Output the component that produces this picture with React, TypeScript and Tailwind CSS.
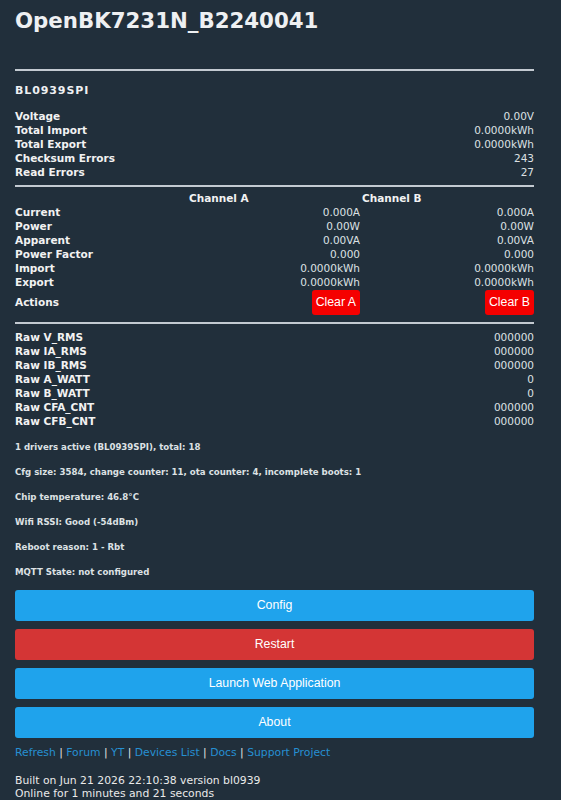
import React from 'react';

const summaryRows = [
  ['Voltage', '0.00V'],
  ['Total Import', '0.0000kWh'],
  ['Total Export', '0.0000kWh'],
  ['Checksum Errors', '243'],
  ['Read Errors', '27'],
];

const channelRows = [
  ['Current', '0.000A', '0.000A'],
  ['Power', '0.00W', '0.00W'],
  ['Apparent', '0.00VA', '0.00VA'],
  ['Power Factor', '0.000', '0.000'],
  ['Import', '0.0000kWh', '0.0000kWh'],
  ['Export', '0.0000kWh', '0.0000kWh'],
];

const rawRows = [
  ['Raw V_RMS', '000000'],
  ['Raw IA_RMS', '000000'],
  ['Raw IB_RMS', '000000'],
  ['Raw A_WATT', '0'],
  ['Raw B_WATT', '0'],
  ['Raw CFA_CNT', '000000'],
  ['Raw CFB_CNT', '000000'],
];

const infoLines = [
  '1 drivers active (BL0939SPI), total: 18',
  'Cfg size: 3584, change counter: 11, ota counter: 4, incomplete boots: 1',
  'Chip temperature: 46.8°C',
  'Wifi RSSI: Good (-54dBm)',
  'Reboot reason: 1 - Rbt',
  'MQTT State: not configured',
];

const links = ['Refresh', 'Forum', 'YT', 'Devices List', 'Docs', 'Support Project'];

function Rule() {
  return <div className="h-[2px] bg-[#c3cad1]" />;
}

function KeyValue({ label, value }: { label: string; value: string }) {
  return (
    <div className="flex justify-between h-[14px] leading-[14px]">
      <span className="font-bold text-[#f2f2f2]">{label}</span>
      <span className="text-[#dde1e4]">{value}</span>
    </div>
  );
}

export default function App() {
  return (
    <div className="min-h-screen bg-[#212f3b] text-[#eaeaea] text-[10.5px] font-['DejaVu_Sans',sans-serif]">
      <div className="ml-[15px] w-[519px] pt-[9px] pb-[4px]">
        <h1 className="text-[21.3px] font-bold h-[24px] leading-[24px] text-[#eef0f2]">OpenBK7231N_B2240041</h1>

        <div className="mt-[36px]">
          <Rule />
        </div>

        <h3 className="mt-[13px] h-[13px] leading-[13px] text-[11px] font-bold tracking-[0.9px] text-[#eef0f2]">BL0939SPI</h3>

        {/* summary */}
        <div className="mt-[12px]">
          {summaryRows.map(([label, value]) => (
            <KeyValue key={label} label={label} value={value} />
          ))}
        </div>

        <div className="mt-[6px]">
          <Rule />
        </div>

        {/* channels */}
        <div className="mt-[4px] grid grid-cols-[1fr_173px_174px]">
          <div className="h-[14px]" />
          <div className="h-[14px] leading-[14px] pl-[2px] font-bold text-[#f2f2f2]">Channel A</div>
          <div className="h-[14px] leading-[14px] pl-[2px] font-bold text-[#f2f2f2]">Channel B</div>
          {channelRows.map(([label, a, b]) => (
            <React.Fragment key={label}>
              <div className="h-[14px] leading-[14px] font-bold text-[#f2f2f2]">{label}</div>
              <div className="h-[14px] leading-[14px] text-right text-[#dde1e4]">{a}</div>
              <div className="h-[14px] leading-[14px] text-right text-[#dde1e4]">{b}</div>
            </React.Fragment>
          ))}
          <div className="h-[27px] flex items-center font-bold text-[#f2f2f2]">Actions</div>
          <div className="h-[27px] flex items-center justify-end">
            <button className="h-[25px] px-[4px] rounded-[3px] bg-[#f50000] text-white text-[12.3px] font-['Liberation_Sans',Arial,sans-serif]">
              Clear A
            </button>
          </div>
          <div className="h-[27px] flex items-center justify-end">
            <button className="h-[25px] px-[4px] rounded-[3px] bg-[#f50000] text-white text-[12.3px] font-['Liberation_Sans',Arial,sans-serif]">
              Clear B
            </button>
          </div>
        </div>

        <div className="mt-[6px]">
          <Rule />
        </div>

        {/* raw registers */}
        <div className="mt-[6px]">
          {rawRows.map(([label, value]) => (
            <KeyValue key={label} label={label} value={value} />
          ))}
        </div>

        {/* device info */}
        <div className="mt-[14px] flex flex-col gap-[14px]">
          {infoLines.map(line => (
            <div key={line} className="h-[11px] leading-[11px] text-[8.6px] font-bold text-[#dde1e4]">
              {line}
            </div>
          ))}
        </div>

        {/* main buttons */}
        <div className="mt-[12px] flex flex-col gap-[8px] font-['Liberation_Sans',Arial,sans-serif] text-[12.3px] text-white">
          <button className="h-[31px] rounded-[3px] bg-[#1fa3ec]">Config</button>
          <button className="h-[31px] rounded-[3px] bg-[#d43535]">Restart</button>
          <button className="h-[31px] rounded-[3px] bg-[#1fa3ec]">Launch Web Application</button>
          <button className="h-[31px] rounded-[3px] bg-[#1fa3ec]">About</button>
        </div>

        <div className="mt-[8px] h-[14px] leading-[14px] text-[10.8px] text-[#e4e4e4]">
          {links.map((link, idx) => (
            <React.Fragment key={link}>
              {idx > 0 && <span> | </span>}
              <a href="#" className="text-[#2690d2]">{link}</a>
            </React.Fragment>
          ))}
        </div>

        <div className="mt-[14px] text-[10.8px] leading-[13px] text-[#eaeaea]">
          <div>Built on Jun 21 2026 22:10:38 version bl0939</div>
          <div>Online for 1 minutes and 21 seconds</div>
        </div>
      </div>
    </div>
  );
}
